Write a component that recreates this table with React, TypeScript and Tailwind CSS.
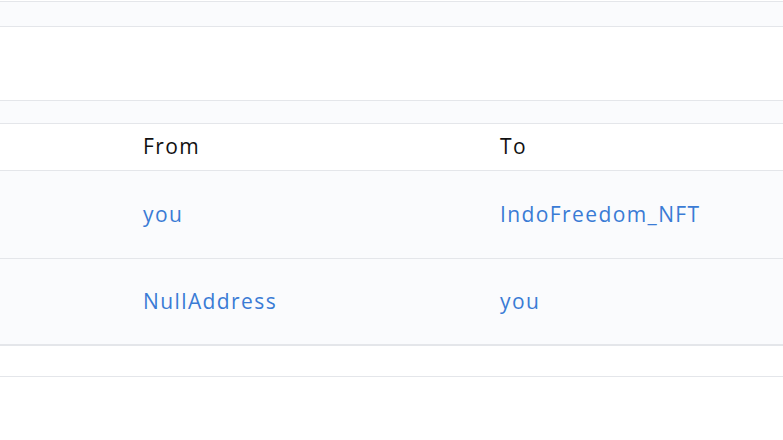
const rows = [
  { from: "you", to: "IndoFreedom_NFT" },
  { from: "NullAddress", to: "you" },
];

export default function App() {
  return (
    <div
      className="w-[783px] h-[440px] overflow-hidden bg-white text-[21px] tracking-[1.4px]"
      style={{ fontFamily: '"Open Sans", "Liberation Sans", sans-serif' }}
    >
      <div className="h-[1px]" />
      <div className="h-[26px] bg-[#fafbfd] border-y border-[#e4e6ea]" />
      <div className="h-[73px]" />
      <div className="h-[24px] bg-[#fafbfd] border-y border-[#e4e6ea]" />

      {/* header */}
      <div className="flex h-[47px] items-center border-b border-[#e4e6ea] text-[#111111]">
        <div className="w-[143px]" />
        <div className="w-[357px]">From</div>
        <div className="flex-1">To</div>
      </div>

      {rows.map((row, i) => (
        <div
          key={i}
          className={
            i === rows.length - 1
              ? "flex h-[87px] items-center bg-[#fafbfd] border-b-2 border-[#e4e6ea] text-[#3a7bd5]"
              : "flex h-[88px] items-center bg-[#fafbfd] border-b border-[#e4e6ea] text-[#3a7bd5]"
          }
        >
          <div className="w-[143px]" />
          <div className="w-[357px]">{row.from}</div>
          <div className="flex-1">{row.to}</div>
        </div>
      ))}

      <div className="h-[31px] border-b border-[#e4e6ea]" />
    </div>
  );
}
